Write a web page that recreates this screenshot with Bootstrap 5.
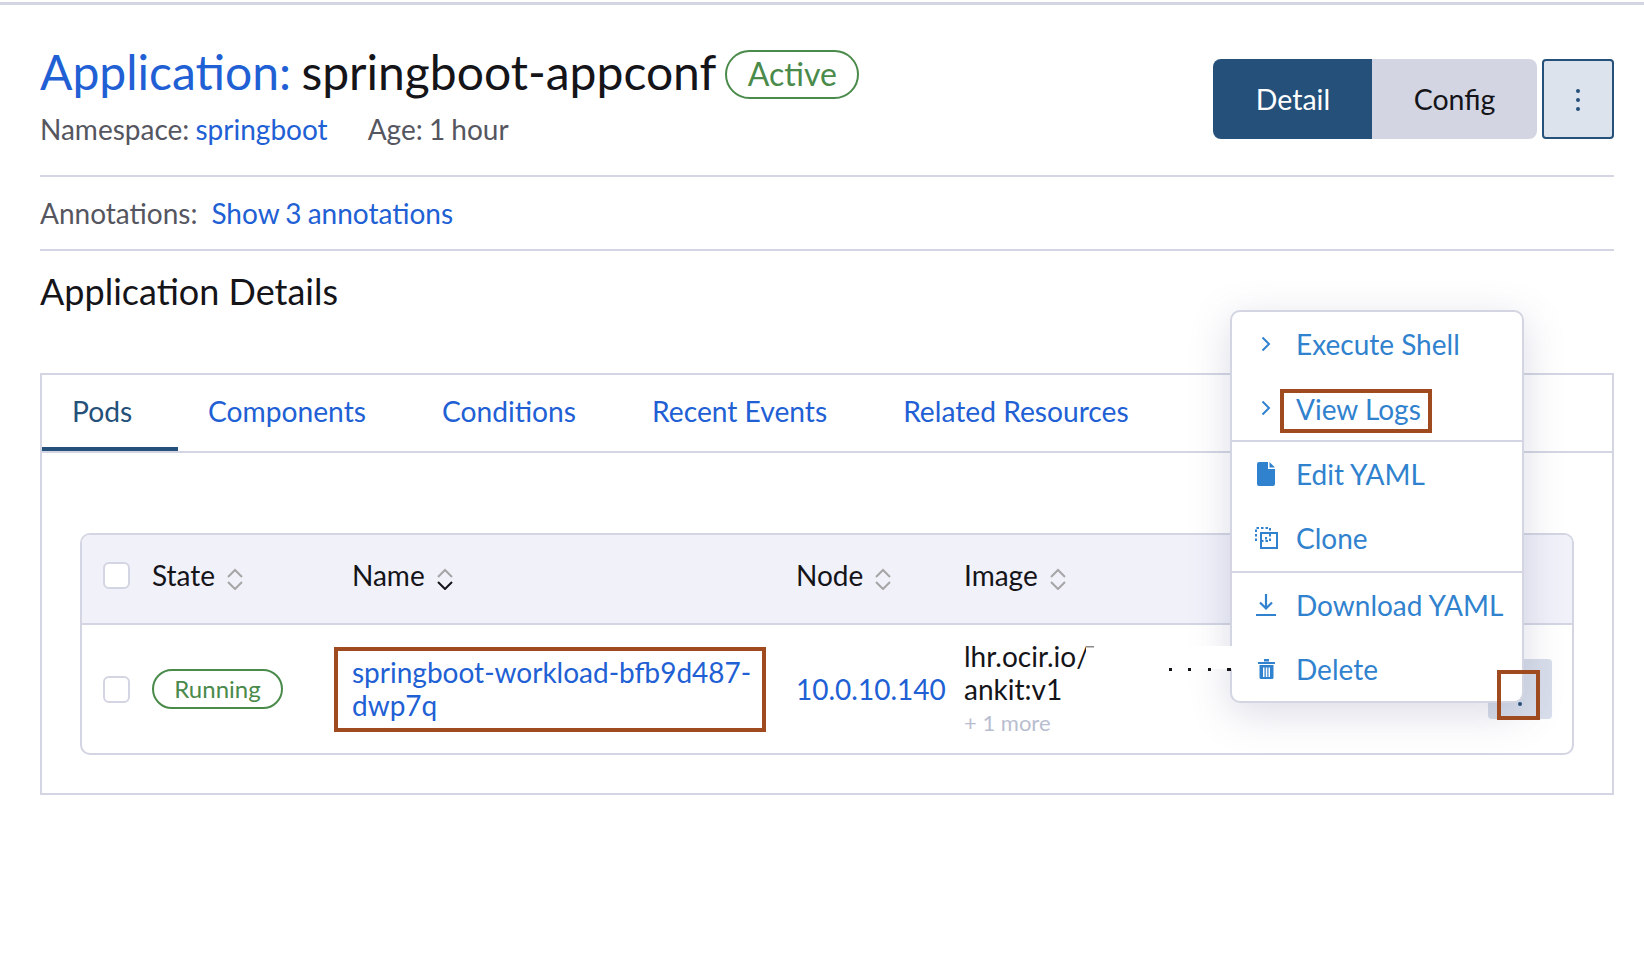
<!DOCTYPE html>
<html lang="en">
<head>
    <meta charset="UTF-8">
    <meta name="viewport" content="width=device-width, initial-scale=1.0">
    <title>Application: springboot-appconf</title>
    <link href="https://cdn.jsdelivr.net/npm/bootstrap@5.3.0/dist/css/bootstrap.min.css" rel="stylesheet">
    <style>
        body { font-family: Lato, "Liberation Sans", sans-serif; color: #141419; background: #fff; }
        a { text-decoration: none; color: #2160d4; }
        .top-rule { height: 3px; margin-top: 2px; background: #d3d6e2; }
        .page-wrap { padding: 0 30px 0 40px; }
        .head-row { height: 170px; }
        .app-title { font-size: 48px; font-weight: 400; line-height: 56px; margin: 39px 0 0; white-space: nowrap; word-spacing: -2px; }
        .state-pill { border: 2px solid #4a8a4a; color: #4a8a4a; background: #fff; font-weight: 400; }
        .state-active { font-size: 32px; height: 49px; width: 134px; padding: 0; line-height: 44px; margin-left: 9px; vertical-align: 4px; }
        .state-running { font-size: 24px; height: 40px; width: 131px; padding: 0; line-height: 35px; }
        .meta-row { font-size: 28px; line-height: 36px; color: #55565f; margin-top: 11px; word-spacing: -1px; }
        .age-text { margin-left: 40px; }
        .view-btns { margin-top: 54px; }
        .view-btns .btn { font-size: 28.500px; height: 80px; border: 0; line-height: 80px; padding: 0; }
        .btn-detail { width: 160px; background: #24507a; color: #fff; border-radius: 8px 0 0 8px; }
        .btn-config { width: 165px; background: #d3d6e2; color: #141419; border-radius: 0 8px 8px 0; }
        .btn-kebab { width: 72px; height: 80px; margin-left: 5px; padding: 0; background: #dce3ed; border: 2px solid #24507a; border-radius: 4px; }
        .line-sep { height: 2px; background: #d3d6e2; }
        .annot-row { height: 72px; font-size: 28px; color: #55565f; word-spacing: -1px; }
        .annot-row a { margin-left: 14px; }
        .sec-title { font-size: 36px; font-weight: 400; line-height: 42px; margin: 19px 0 61px; }
        .tab-box { border: 2px solid #d3d6e2; height: 422px; }
        .tab-head { height: 78px; border-bottom: 2px solid #d3d6e2; font-size: 28.200px; flex-wrap: nowrap; }
        .tab-link { padding: 0 46px 0 30px; height: 76px; line-height: 72px; color: #2160d4; display: block; }
        .tab-link.active { color: #24507a; border-bottom: 4px solid #24507a; width: 136px; padding-right: 0; }
        .tab-body { padding: 80px 38px 0; }
        .pods-wrap { border: 2px solid #d3d6e2; border-radius: 10px; }
        .pods-table { table-layout: fixed; margin: 0; font-size: 28px; border-collapse: separate; border-spacing: 0; }
        .pods-table th { background: #f0f1f9; font-weight: 400; height: 90px; padding: 0 0 8px; vertical-align: middle; border-bottom: 2px solid #d3d6e2; color: #141419; }
        .pods-table th:first-child { border-top-left-radius: 8px; }
        .pods-table th:last-child { border-top-right-radius: 8px; }
        .pods-table td { height: 128px; padding: 0; vertical-align: middle; border: 0; line-height: 33px; color: #141419; }
        .tick-cell { padding-left: 21px !important; }
        .tick-box.form-check-input { width: 27px; height: 27px; margin: 0; border: 2px solid #d3d6e2; border-radius: 6px; display: block; float: none; }
        .sort-ico { width: 16px; height: 22px; margin-left: 5px; vertical-align: -4px; }
        .name-flag { display: block; width: 432px; height: 85px; margin-left: -18px; border: 4px solid #a04a20; padding: 5px 0 0 14px; }
        .more-imgs { font-size: 22px; color: #b9bdd0; line-height: 33px; }
        .img-cell { white-space: nowrap; }
        .row-action { width: 64px; height: 60px; background: #d8deea; border: 0; border-radius: 4px; padding: 0; }
        .action-cell { position: relative; }
        .action-flag { position: absolute; left: 9px; top: 11px; width: 43px; height: 50px; border: 4px solid #a04a20; z-index: 20; pointer-events: none; }
        .pod-menu.dropdown-menu { display: block; position: absolute; right: 48px; bottom: 16px; width: 294px; padding: 0; margin: 0; font-size: 28px; border: 2px solid #d3d6e2; border-radius: 10px; background: #fff; box-shadow: 0 10px 40px rgba(90, 95, 140, .22); z-index: 10; }
        .pod-menu .menu-row { display: flex; align-items: center; height: 64px; padding: 0; color: #3182ce; line-height: 36px; background: none; }
        .menu-ico { width: 64px; flex: none; display: flex; justify-content: center; padding-left: 4px; }
        .menu-sep { height: 2px; background: #d3d6e2; margin: 0; border: 0; opacity: 1; }
        .menu-sep.lower-sep { margin-top: 1px; }
        .logs-flag { border: 4px solid #a04a20; width: 152px; height: 44px; line-height: 32px; margin: 6px 0 0 -16px; padding-left: 12px; }
        .mask-strip { position: absolute; left: -146px; top: 334px; width: 146px; height: 28px; background: linear-gradient(#fff 23px, transparent 23px); }
        .mask-strip svg { display: block; }
    </style>
</head>
<body>
    <div class="top-rule"></div>

    <div class="page-wrap">
        <!-- Title and view switch -->
        <div class="head-row d-flex justify-content-between">
            <div>
                <h1 class="app-title"><a href="#">Application:</a> springboot-appconf<span class="badge rounded-pill state-pill state-active">Active</span></h1>
                <div class="meta-row">Namespace: <a href="#">springboot</a><span class="age-text">Age: 1 hour</span></div>
            </div>
            <div class="view-btns d-flex align-items-start">
                <div class="btn-group">
                    <button type="button" class="btn btn-detail">Detail</button>
                    <button type="button" class="btn btn-config">Config</button>
                </div>
                <button type="button" class="btn-kebab">
                    <svg width="6" height="24" viewBox="0 0 6 24" fill="#24507a"><circle cx="3" cy="3" r="2"/><circle cx="3" cy="12" r="2"/><circle cx="3" cy="21" r="2"/></svg>
                </button>
            </div>
        </div>
        <div class="line-sep"></div>
        <div class="annot-row d-flex align-items-center">Annotations: <a href="#">Show 3 annotations</a></div>
        <div class="line-sep"></div>

        <h2 class="sec-title">Application Details</h2>

        <div class="tab-box">
            <ul class="tab-head nav">
                <li class="nav-item"><a class="tab-link active" href="#">Pods</a></li>
                <li class="nav-item"><a class="tab-link" href="#">Components</a></li>
                <li class="nav-item"><a class="tab-link" href="#">Conditions</a></li>
                <li class="nav-item"><a class="tab-link" href="#">Recent Events</a></li>
                <li class="nav-item"><a class="tab-link" href="#">Related Resources</a></li>
            </ul>
            <div class="tab-body">
                <div class="pods-wrap">
                    <table class="table pods-table">
                        <colgroup>
                            <col style="width:70px"><col style="width:200px"><col style="width:444px"><col style="width:168px"><col style="width:524px"><col>
                        </colgroup>
                        <thead>
                            <tr>
                                <th class="tick-cell"><input class="form-check-input tick-box" type="checkbox"></th>
                                <th>State <svg class="sort-ico" viewBox="0 0 16 22" fill="none" stroke="#a6a6a6" stroke-width="2"><path d="M1 9l7-7 7 7M1 14l7 7 7-7"/></svg></th>
                                <th>Name <svg class="sort-ico" viewBox="0 0 16 22" fill="none" stroke-width="2"><path stroke="#a6a6a6" d="M1 9l7-7 7 7"/><path stroke="#141419" d="M1 14l7 7 7-7"/></svg></th>
                                <th>Node <svg class="sort-ico" viewBox="0 0 16 22" fill="none" stroke="#a6a6a6" stroke-width="2"><path d="M1 9l7-7 7 7M1 14l7 7 7-7"/></svg></th>
                                <th>Image <svg class="sort-ico" viewBox="0 0 16 22" fill="none" stroke="#a6a6a6" stroke-width="2"><path d="M1 9l7-7 7 7M1 14l7 7 7-7"/></svg></th>
                                <th></th>
                            </tr>
                        </thead>
                        <tbody>
                            <tr>
                                <td class="tick-cell"><input class="form-check-input tick-box" type="checkbox"></td>
                                <td><span class="badge rounded-pill state-pill state-running">Running</span></td>
                                <td><a class="name-flag" href="#">springboot-workload-bfb9d487-dwp7q</a></td>
                                <td><a href="#">10.0.10.140</a></td>
                                <td class="img-cell">lhr.ocir.io/<br>ankit:v1<div class="more-imgs">+ 1 more</div></td>
                                <td>
                                    <div class="action-cell">
                                        <button type="button" class="row-action">
                                            <svg width="6" height="31" viewBox="0 0 6 31" fill="#24507a"><circle cx="3" cy="3" r="2"/><circle cx="3" cy="15.500" r="2"/><circle cx="3" cy="28" r="2"/></svg>
                                        </button>
                                        <span class="action-flag"></span>
                                        <div class="dropdown-menu pod-menu">
                                            <span class="mask-strip">
                                                <svg width="146" height="28" viewBox="0 0 146 28" fill="#141419"><rect x="0" y="0" width="8" height="1.500" fill="#8a8a8a"/><rect x="83" y="22" width="3" height="3"/><rect x="102" y="22" width="3" height="3"/><rect x="122" y="22" width="3" height="3"/><rect x="141" y="22" width="4" height="3"/></svg>
                                            </span>
                                            <a class="dropdown-item menu-row" href="#">
                                                <span class="menu-ico"><svg width="10" height="16" viewBox="0 0 10 16" fill="none" stroke="#3182ce" stroke-width="2"><path d="M1.5 1.5L8 8l-6.500 6.500"/></svg></span>Execute Shell
                                            </a>
                                            <a class="dropdown-item menu-row" href="#">
                                                <span class="menu-ico"><svg width="10" height="16" viewBox="0 0 10 16" fill="none" stroke="#3182ce" stroke-width="2"><path d="M1.5 1.5L8 8l-6.500 6.500"/></svg></span><span class="logs-flag">View Logs</span>
                                            </a>
                                            <hr class="menu-sep">
                                            <a class="dropdown-item menu-row" href="#">
                                                <span class="menu-ico"><svg width="18" height="24" viewBox="0 0 18 24" fill="#3182ce"><path d="M2 0h9v7h7v15a2 2 0 0 1-2 2H2a2 2 0 0 1-2-2V2a2 2 0 0 1 2-2zM12.500 0L18 5.500h-5.500z"/></svg></span>Edit YAML
                                            </a>
                                            <a class="dropdown-item menu-row" href="#">
                                                <span class="menu-ico"><svg width="23" height="22" viewBox="0 0 23 22" fill="none" stroke="#3182ce" stroke-width="2"><path stroke-dasharray="2.500 2" d="M1 14V1h14v4"/><path d="M6 6h16v15H6z"/><path stroke-dasharray="2.500 2" d="M6 14h9V6M11 10v4"/></svg></span>Clone
                                            </a>
                                            <hr class="menu-sep lower-sep">
                                            <a class="dropdown-item menu-row" href="#">
                                                <span class="menu-ico"><svg width="20" height="22" viewBox="0 0 20 22" fill="none" stroke="#3182ce" stroke-width="2.200"><path d="M10 0v14M4 8.500l6 6 6-6M0 21h20"/></svg></span>Download YAML
                                            </a>
                                            <a class="dropdown-item menu-row" href="#">
                                                <span class="menu-ico"><svg width="17" height="20" viewBox="0 0 17 20" fill="#3182ce"><path d="M0 3h17v2H0zM6 0h5v2.500H6zM1.500 6h14v12.500a1.500 1.500 0 0 1-1.500 1.500H3a1.500 1.500 0 0 1-1.500-1.500zM5 8.500V18h1.500V8.500zM7.800 8.500V18h1.500V8.500zM10.500 8.500V18H12V8.500z" fill-rule="evenodd"/></svg></span>Delete
                                            </a>
                                        </div>
                                    </div>
                                </td>
                            </tr>
                        </tbody>
                    </table>
                </div>
            </div>
        </div>
    </div>

    <script src="https://cdn.jsdelivr.net/npm/bootstrap@5.3.0/dist/js/bootstrap.bundle.min.js"></script>
</body>
</html>
